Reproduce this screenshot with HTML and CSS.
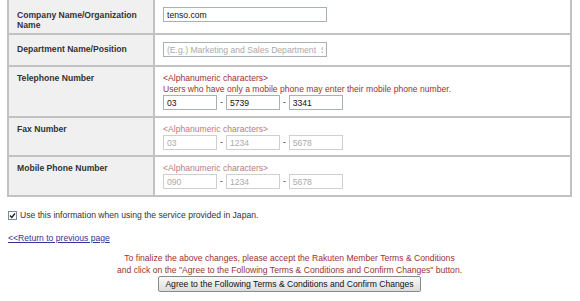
FILE: index.html
```html
<!DOCTYPE html>
<html lang="en">
<head>
    <meta charset="UTF-8">
    <meta name="viewport" content="width=device-width, initial-scale=1.0">
    <title>Member Information</title>
    <link rel="stylesheet" href="styles.css">
</head>
<body>
    <table class="form-table">
        <tr class="row-company">
            <th>Company Name/Organization Name</th>
            <td><input class="text-long" type="text" value="tenso.com"></td>
        </tr>
        <tr class="row-dept">
            <th>Department Name/Position</th>
            <td><input class="text-long" type="text" placeholder="(E.g.) Marketing and Sales Department  Section Manager"></td>
        </tr>
        <tr class="row-phone">
            <th>Telephone Number</th>
            <td>
                <div class="hint">&lt;Alphanumeric characters&gt;</div>
                <div class="hint">Users who have only a mobile phone may enter their mobile phone number.</div>
                <div class="phone">
                    <input class="text-short" type="text" value="03">
                    <span class="dash">-</span>
                    <input class="text-short" type="text" value="5739">
                    <span class="dash">-</span>
                    <input class="text-short" type="text" value="3341">
                </div>
            </td>
        </tr>
        <tr class="row-phone row-fax">
            <th>Fax Number</th>
            <td>
                <div class="hint hint-light">&lt;Alphanumeric characters&gt;</div>
                <div class="phone">
                    <input class="text-short" type="text" placeholder="03">
                    <span class="dash">-</span>
                    <input class="text-short" type="text" placeholder="1234">
                    <span class="dash">-</span>
                    <input class="text-short" type="text" placeholder="5678">
                </div>
            </td>
        </tr>
        <tr class="row-phone">
            <th>Mobile Phone Number</th>
            <td>
                <div class="hint hint-light">&lt;Alphanumeric characters&gt;</div>
                <div class="phone">
                    <input class="text-short" type="text" placeholder="090">
                    <span class="dash">-</span>
                    <input class="text-short" type="text" placeholder="1234">
                    <span class="dash">-</span>
                    <input class="text-short" type="text" placeholder="5678">
                </div>
            </td>
        </tr>
    </table>

    <label class="use-japan">
        <svg class="check" width="9" height="9" viewBox="0 0 9 9">
            <rect x="0.5" y="0.5" width="8" height="8" fill="#fff" stroke="#7a8a99"/>
            <path d="M2 4.5 L3.8 6.5 L7 2.5" fill="none" stroke="#222" stroke-width="1.4"/>
        </svg>
        Use this information when using the service provided in Japan.
    </label>

    <a class="back-link" href="#">&lt;&lt;Return to previous page</a>

    <div class="confirm">
        <p>To finalize the above changes, please accept the Rakuten Member Terms &amp; Conditions<br>
        and click on the "Agree to the Following Terms &amp; Conditions and Confirm Changes" button.</p>
        <button type="button">Agree to the Following Terms &amp; Conditions and Confirm Changes</button>
    </div>
</body>
</html>
```

FILE: styles.css
```css
body {
    font-family: 'Liberation Sans', Arial, sans-serif;
    font-size: 8.6px;
    line-height: 11px;
    color: #333;
    margin: 0 8px 0 7px;
    background-color: #fff;
}
.form-table {
    border-collapse: collapse;
    width: 100%;
    margin-top: -2px;
}
.form-table th,
.form-table td {
    border: 2px solid #c2c2c2;
    padding: 6px 8px 6px 8px;
    text-align: left;
    vertical-align: top;
}
.form-table th {
    width: 128px;
    background-color: #f0f0f0;
    font-weight: bold;
    color: #333;
    line-height: 10px;
}
.row-company th {
    padding-top: 10px;
    padding-bottom: 3px;
}
.row-company td {
    padding-top: 7px;
    padding-bottom: 9px;
}
.row-dept th {
    padding-top: 9px;
    padding-bottom: 9px;
}
.row-dept td {
    padding-top: 7px;
    padding-bottom: 8px;
}
.row-phone td {
    padding-bottom: 6px;
}
.row-fax td {
    padding-bottom: 5px;
}
.hint {
    color: #993333;
}
.hint-light {
    color: #c07a7a;
}
input {
    font-family: 'Liberation Sans', Arial, sans-serif;
    font-size: 8.6px;
    height: 15px;
    box-sizing: border-box;
    border: 1px solid #a9b0b6;
    padding: 0 3px;
    margin: 0;
    color: #111;
    vertical-align: top;
}
input::placeholder {
    color: #aaa;
}
.text-long {
    width: 164px;
}
.text-short {
    width: 54px;
}
.phone {
    display: flex;
    align-items: center;
    gap: 3px;
    height: 15px;
}
.phone input:placeholder-shown {
    border-color: #cfcfcf;
}
.dash {
    color: #333;
}
.use-japan {
    display: flex;
    align-items: center;
    gap: 3px;
    margin: 13px 0 0 1px;
    color: #333;
}
.back-link {
    display: inline-block;
    margin: 12px 0 0 1px;
    color: #333399;
}
.confirm {
    text-align: center;
    margin-top: 8px;
}
.confirm p {
    margin: 0;
    color: #993333;
    line-height: 12px;
}
button {
    font-family: 'Liberation Sans', Arial, sans-serif;
    font-size: 8.6px;
    height: 16px;
    margin-top: 0;
    padding: 0 6px;
    border: 1px solid #8a8a8a;
    border-radius: 2px;
    background: linear-gradient(#fafafa, #dcdcdc);
    color: #111;
}
```
